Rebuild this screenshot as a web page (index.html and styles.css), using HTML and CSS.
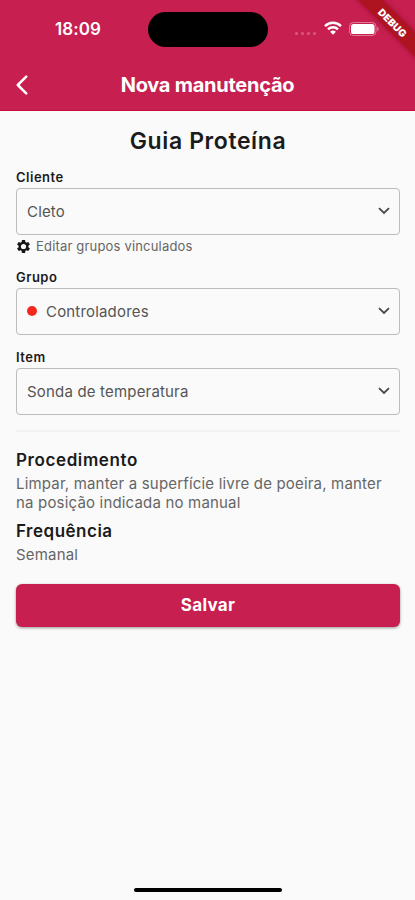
FILE: index.html
```html
<!DOCTYPE html>
<html lang="pt-BR">
<head>
<meta charset="utf-8">
<meta name="viewport" content="width=device-width, initial-scale=1">
<title>Nova manutenção</title>
<link rel="stylesheet" href="styles.css">
</head>
<body>
<header class="header">
  <div class="status">
    <span class="time">18:09</span>
    <div class="island"></div>
    <div class="indicators">
      <span class="signal"><i></i><i></i><i></i><i></i></span>
      <svg class="wifi" width="18" height="14" viewBox="0 0 18 14" fill="none" stroke="#fff" stroke-width="2.5"><path d="M1 5.1C5.5.7 12.5.7 17 5.1M4 8.3c2.8-2.7 7.2-2.7 10 0"/><path d="M9 13.7 6.1 10.7c1.6-1.5 4.2-1.5 5.8 0z" fill="#fff" stroke="none"/></svg>
      <svg class="battery" width="31" height="14" viewBox="0 0 31 14"><rect x=".5" y=".5" width="26.5" height="13" rx="4" fill="none" stroke="#fff" stroke-opacity=".4"/><rect x="2" y="2" width="23.5" height="10" rx="2.6" fill="#fff"/><path d="M28.3 4.8c1.8.7 1.8 3.7 0 4.4z" fill="#fff" fill-opacity=".5"/></svg>
    </div>
  </div>
  <div class="appbar">
    <svg class="back" width="12" height="20" viewBox="0 0 12 20" fill="none" stroke="#fff" stroke-width="2.5" stroke-linecap="round" stroke-linejoin="round"><path d="M10.2 1.6 1.8 10l8.4 8.4"/></svg>
    <h1>Nova manutenção</h1>
  </div>
  <div class="debug"><span>DEBUG</span></div>
</header>
<main>
  <h2 class="title">Guia Proteína</h2>
  <section class="field client">
    <div class="label">Cliente</div>
    <div class="select"><span class="value">Cleto</span><svg class="chevron" width="12" height="8" viewBox="0 0 12 8"><path d="M1 1.2 6 6l5-4.8"/></svg></div>
    <div class="edit"><svg width="13" height="13" viewBox="2 2 20 20"><path fill="#151515" fill-rule="evenodd" d="M19.43 12.98c.04-.32.07-.64.07-.98s-.03-.66-.07-.98l2.11-1.65a.5.5 0 0 0 .12-.64l-2-3.46a.5.5 0 0 0-.61-.22l-2.49 1a7.3 7.3 0 0 0-1.69-.98l-.38-2.65A.49.49 0 0 0 14 2h-4a.49.49 0 0 0-.49.42l-.38 2.65c-.61.25-1.17.59-1.69.98l-2.49-1a.5.5 0 0 0-.61.22l-2 3.46a.5.5 0 0 0 .12.64l2.11 1.65a8 8 0 0 0 0 1.96l-2.11 1.65a.5.5 0 0 0-.12.64l2 3.46c.12.22.39.3.61.22l2.49-1c.52.4 1.08.73 1.69.98l.38 2.65c.03.24.24.42.49.42h4c.25 0 .46-.18.49-.42l.38-2.65c.61-.25 1.17-.59 1.69-.98l2.49 1c.23.09.49 0 .61-.22l2-3.46a.5.5 0 0 0-.12-.64zM12 16a4 4 0 1 1 0-8 4 4 0 0 1 0 8z"/></svg><span>Editar grupos vinculados</span></div>
  </section>
  <section class="field group">
    <div class="label">Grupo</div>
    <div class="select"><i class="dot"></i><span class="value">Controladores</span><svg class="chevron" width="12" height="8" viewBox="0 0 12 8"><path d="M1 1.2 6 6l5-4.8"/></svg></div>
  </section>
  <section class="field item">
    <div class="label">Item</div>
    <div class="select"><span class="value">Sonda de temperatura</span><svg class="chevron" width="12" height="8" viewBox="0 0 12 8"><path d="M1 1.2 6 6l5-4.8"/></svg></div>
  </section>
  <hr>
  <h3 class="proc">Procedimento</h3>
  <p class="text">Limpar, manter a superfície livre de poeira, manter<br>na posição indicada no manual</p>
  <h3 class="freq">Frequência</h3>
  <p class="text week">Semanal</p>
  <button type="button">Salvar</button>
</main>
<footer><div class="home"></div></footer>
</body>
</html>
```
FILE: styles.css
```css
* { box-sizing: border-box; }
body { margin: 0; height: 900px; display: flex; flex-direction: column; background: #fafafa; color: #1b1b1b; font-family: Inter, "Liberation Sans", sans-serif; overflow: hidden; }
h1, h2, h3, p { margin: 0; }
.header { height: 111px; flex: none; position: relative; overflow: hidden; background: #c71f4f; border-bottom: 1px solid #c40d38; color: #fff; }
.status { height: 58px; display: grid; grid-template-columns: 148px 120px 1fr; align-items: center; }
.time { padding-left: 55px; font-size: 17px; font-weight: 600; letter-spacing: .1px; }
.island { height: 35px; border-radius: 18px; background: #000; }
.indicators { display: flex; align-items: center; padding-left: 27px; }
.signal { display: flex; gap: 3px; margin: 8px 8px 0 0; }
.signal i { width: 3px; height: 3px; border-radius: 50%; background: #da5a82; }
.wifi { margin: -2px 7px 0 0; }
.appbar { height: 53px; display: flex; align-items: center; justify-content: center; position: relative; }
.back { position: absolute; left: 16px; top: 17px; }
h1 { font-size: 20px; line-height: 24px; font-weight: 700; letter-spacing: -.25px; }
.debug { position: absolute; width: 120px; height: 17px; left: 333px; top: 14px; transform: rotate(45deg); background: #ae1420; box-shadow: 0 0 5px #7b001b99; display: flex; align-items: center; justify-content: center; padding-bottom: 1px; }
.debug span { position: relative; top: 1px; font-size: 10px; font-weight: 900; letter-spacing: .2px; }
main { padding: 0 15px 0 16px; flex: 1; }
.title { margin-top: 16px; text-align: center; font-size: 23px; line-height: 28px; font-weight: 600; letter-spacing: .6px; }
.label { height: 19px; line-height: 16px; font-size: 13px; font-weight: 600; letter-spacing: .5px; }
.client { margin-top: 14px; }
.select { height: 47px; border: 1px solid #bcbcbc; border-radius: 4px; display: flex; align-items: center; padding: 0 9px 1px 10px; color: #555; }
.value { font-size: 15px; letter-spacing: .18px; }
.chevron { margin-left: auto; fill: none; stroke: #484848; stroke-width: 1.8; }
.edit { height: 20px; display: flex; align-items: center; gap: 6px; padding: 2px 0 0 1px; color: #666; font-size: 13px; letter-spacing: .18px; }
.group { margin-top: 14px; }
.dot { width: 10px; height: 10px; border-radius: 50%; background: #f5281e; margin-right: 9px; }
.item { margin-top: 14px; }
hr { margin: 15px 0 0; height: 2px; border: 0; background: #f1f1f1; }
h3 { font-size: 17px; line-height: 20px; font-weight: 600; letter-spacing: .6px; }
.proc { margin-top: 18px; }
.text { margin-top: 5px; color: #666; font-size: 15px; line-height: 18.5px; letter-spacing: .18px; white-space: nowrap; }
.freq { margin-top: 9px; letter-spacing: .5px; }
button { display: block; width: 100%; height: 43px; margin-top: 19px; padding: 0; border: 0; border-radius: 6px; background: #c71f4f; box-shadow: 0 1px 3px #0006; color: #fff; font: 700 17px Inter, sans-serif; letter-spacing: .3px; }
footer { height: 12px; flex: none; display: flex; justify-content: center; }
.home { width: 148px; height: 4px; border-radius: 2px; background: #000; }
```
